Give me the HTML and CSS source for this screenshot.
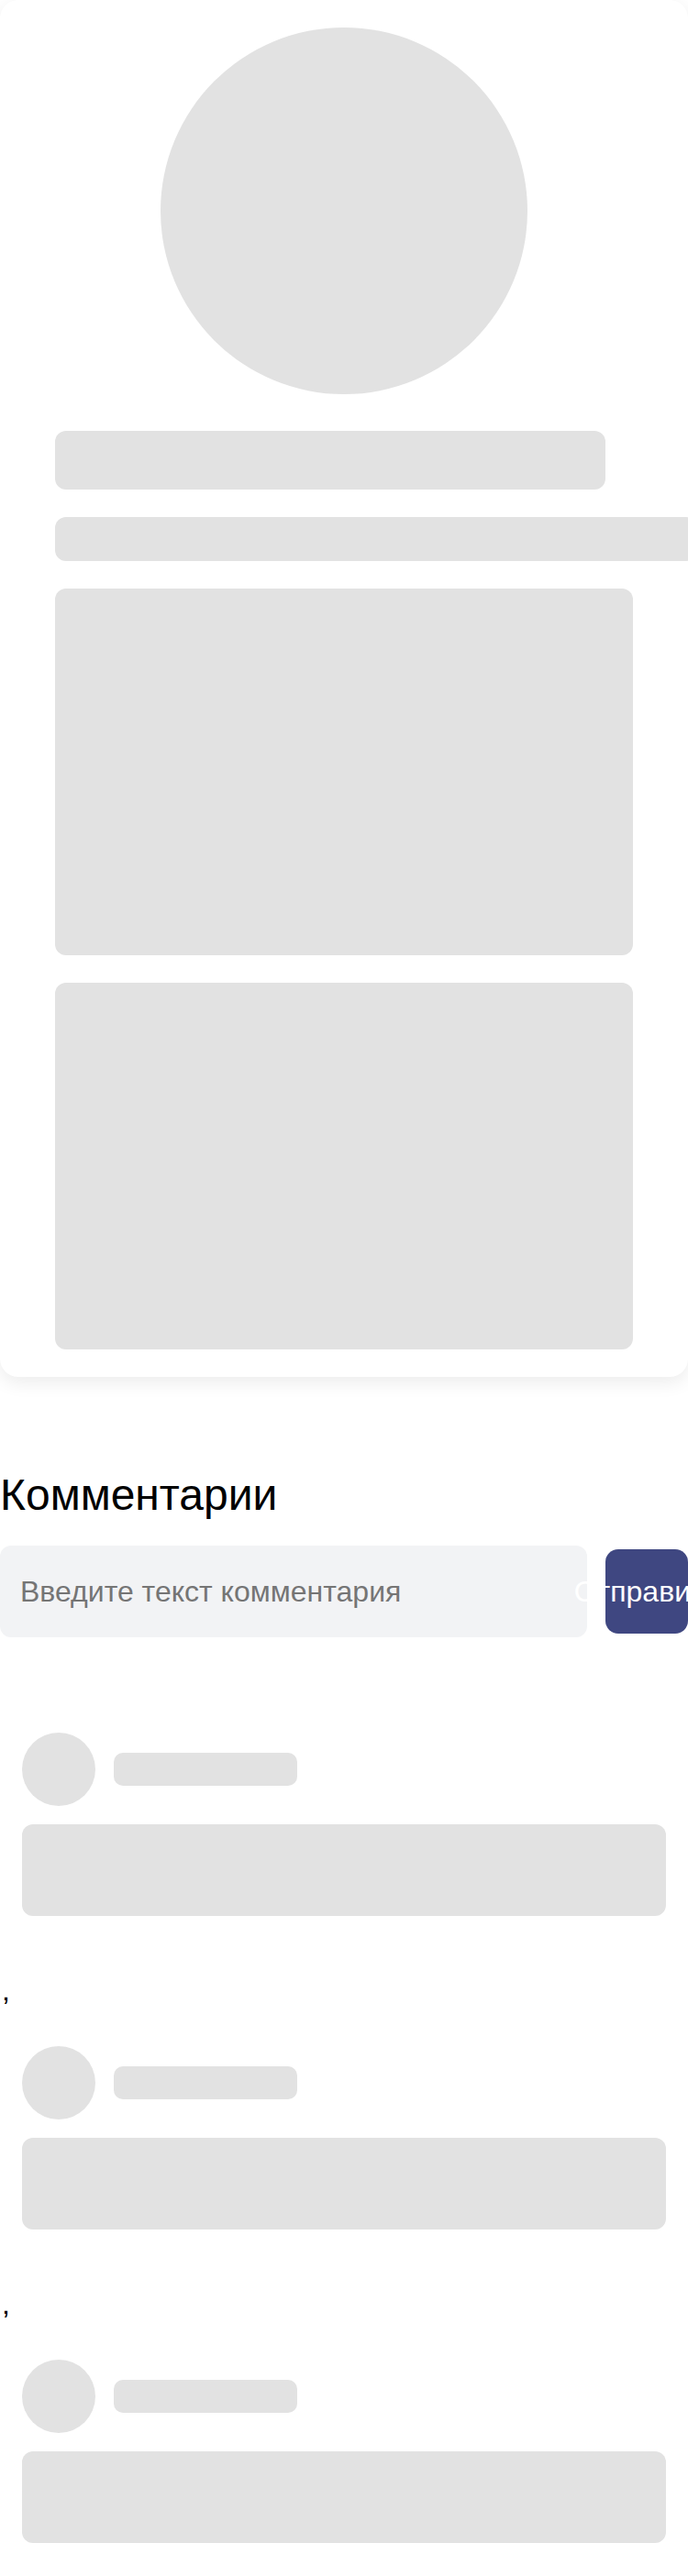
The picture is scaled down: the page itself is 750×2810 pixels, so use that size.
FILE: index.html
```html
<!DOCTYPE html>
<html lang="ru">
<head>
<meta charset="utf-8">
<title>Пост</title>
<link rel="stylesheet" href="styles.css">
</head>
<body>
<div class="page">
  <div class="card">
    <div class="sk avatar-lg"></div>
    <div class="sk bar-title"></div>
    <div class="sk bar-sub"></div>
    <div class="sk block"></div>
    <div class="sk block"></div>
  </div>

  <section class="comments">
    <h2 class="comments-title">Комментарии</h2>
    <form class="comment-form">
      <input class="comment-input" type="text" placeholder="Введите текст комментария">
      <button class="comment-send" type="button"><span>Отправить</span></button>
    </form>

    <div class="comment-list">
      <div class="comment">
        <div class="comment-head">
          <div class="sk avatar"></div>
          <div class="sk name"></div>
        </div>
        <div class="sk comment-body"></div>
      </div>
      <div class="sep">,</div>
      <div class="comment">
        <div class="comment-head">
          <div class="sk avatar"></div>
          <div class="sk name"></div>
        </div>
        <div class="sk comment-body"></div>
      </div>
      <div class="sep">,</div>
      <div class="comment">
        <div class="comment-head">
          <div class="sk avatar"></div>
          <div class="sk name"></div>
        </div>
        <div class="sk comment-body"></div>
      </div>
    </div>
  </section>
</div>
</body>
</html>
```

FILE: styles.css
```css
html, body {
  margin: 0;
  padding: 0;
  background: #ffffff;
}

body {
  font-family: "Liberation Sans", Arial, sans-serif;
  color: #000;
}

.page {
  width: 750px;
  overflow-x: clip;
}

.sk {
  background: #e2e2e2;
}

/* Post card skeleton */
.card {
  display: flex;
  flex-direction: column;
  align-items: flex-start;
  gap: 30px;
  padding: 30px 60px;
  background: #ffffff;
  border-radius: 20px;
  box-shadow: 0 6px 20px rgba(0, 0, 0, 0.08);
}

.avatar-lg {
  align-self: center;
  width: 400px;
  height: 400px;
  border-radius: 50%;
  margin-bottom: 10px;
}

.bar-title {
  width: 600px;
  height: 64px;
  border-radius: 12px;
}

.bar-sub {
  width: 700px;
  height: 48px;
  border-radius: 12px;
  flex-shrink: 0;
}

.block {
  width: 630px;
  height: 400px;
  border-radius: 12px;
}

/* Comments */
.comments-title {
  margin: 101px 0 0;
  font-size: 48px;
  line-height: 56px;
  font-weight: 400;
}

.comment-form {
  display: flex;
  align-items: center;
  gap: 20px;
  margin: 27px 0 0;
}

.comment-input {
  flex: 1;
  min-width: 0;
  height: 100px;
  box-sizing: border-box;
  padding: 0 22px;
  border: none;
  outline: none;
  border-radius: 12px;
  background: #f2f3f5;
  font-family: "Liberation Sans", Arial, sans-serif;
  font-size: 32px;
  color: #333;
}

.comment-input::placeholder {
  color: #757575;
}

.comment-send {
  flex-shrink: 0;
  width: 90px;
  height: 92px;
  padding: 0;
  border: none;
  border-radius: 14px;
  background: #3f4781;
  color: #ffffff;
  font-family: "Liberation Sans", Arial, sans-serif;
  font-size: 32px;
  display: flex;
  justify-content: center;
  align-items: center;
  overflow: visible;
}

.comment-send span {
  white-space: nowrap;
}

.comment-list {
  margin-top: 104px;
  padding-bottom: 36px;
}

.comment {
  padding: 0 24px;
}

.comment-head {
  display: flex;
  align-items: center;
  gap: 20px;
}

.avatar {
  width: 80px;
  height: 80px;
  border-radius: 50%;
  flex-shrink: 0;
}

.name {
  width: 200px;
  height: 36px;
  border-radius: 10px;
}

.comment-body {
  margin-top: 20px;
  height: 100px;
  border-radius: 12px;
}

.sep {
  height: 32px;
  padding: 65px 0 45px 2px;
  font-size: 32px;
  line-height: 32px;
}
```
